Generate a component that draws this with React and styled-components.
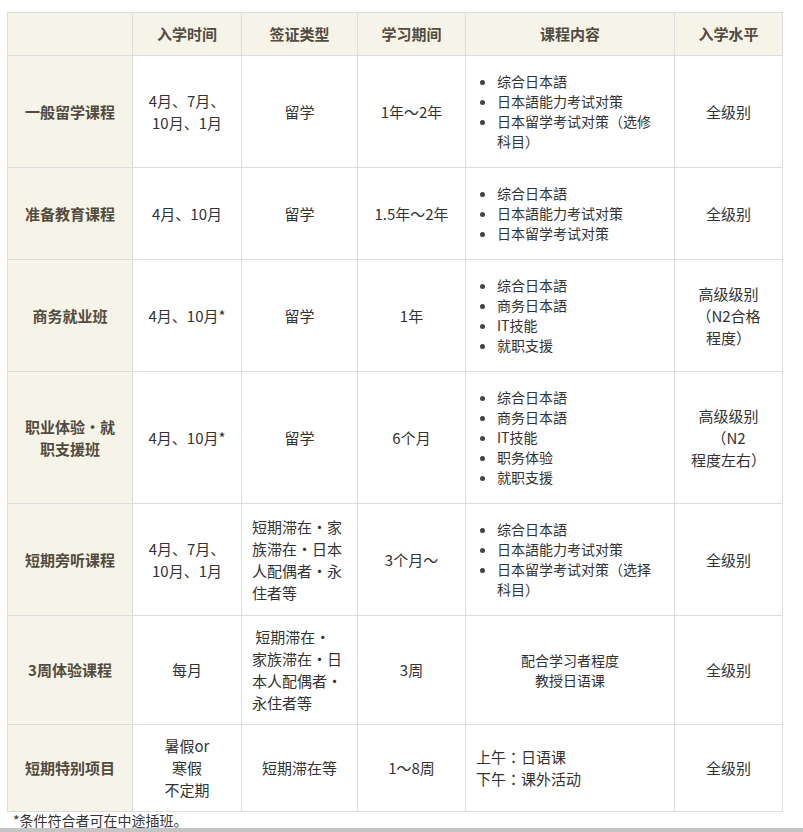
import React from "react";
import styled, { createGlobalStyle } from "styled-components";

const GlobalStyle = createGlobalStyle`
  html, body { margin: 0; padding: 0; background: #fff; }
  body {
    font-family: "Noto Sans CJK SC", "Microsoft YaHei", sans-serif;
    color: #333;
  }
`;

const Page = styled.div`
  padding: 12px 0 0 7px;
`;

const Table = styled.table`
  border-collapse: collapse;
  table-layout: fixed;
  width: 776px;
  font-size: 15px;
  line-height: 22px;
`;

const HeadCell = styled.th`
  background: #f6f4e8;
  border: 1px solid #dddddd;
  color: #524b40;
  font-weight: bold;
  font-size: 15px;
  line-height: 22px;
  padding: 10px;
  text-align: center;
  vertical-align: middle;
`;

const RowHead = styled.th`
  background: #f6f4e8;
  border: 1px solid #dddddd;
  color: #524b40;
  font-weight: bold;
  font-size: 15px;
  line-height: 22px;
  padding: 10px;
  text-align: center;
  vertical-align: middle;
`;

const Cell = styled.td`
  border: 1px solid #dddddd;
  padding: 10px;
  color: #333;
  font-size: ${(p) => (p.$small ? "14px" : "15px")};
  line-height: ${(p) => (p.$small ? "20px" : "22px")};
  text-align: ${(p) => p.$align || "center"};
  vertical-align: middle;
  background: #fff;
`;

const List = styled.ul`
  margin: 5px 0 6px;
  padding: 0 0 0 21px;
  text-align: left;
  list-style: disc outside;
`;

const Item = styled.li`
  font-size: 14px;
  line-height: 20px;
  color: #333;
  &::marker {
    color: #444;
  }
`;

const Colon = styled.span`
  font-family: "Noto Sans CJK JP", "Noto Sans CJK SC", sans-serif;
`;

const Footnote = styled.p`
  margin: 0;
  padding: 0 0 0 6px;
  font-size: 14px;
  line-height: 16px;
  color: #333;
`;

const BottomBar = styled.div`
  height: 6px;
  background: #c4c4c4;
`;

const renderText = (l) => {
  if (typeof l !== "string" || !l.includes("：")) return l;
  const parts = l.split("：");
  return parts.map((p, i) => (
    <React.Fragment key={i}>
      {i > 0 && <Colon>：</Colon>}
      {p}
    </React.Fragment>
  ));
};

const Lines = ({ lines }) =>
  lines.map((l, i) => (
    <React.Fragment key={i}>
      {i > 0 && <br />}
      {renderText(l)}
    </React.Fragment>
  ));

const headers = ["", "入学时间", "签证类型", "学习期间", "课程内容", "入学水平"];
const widths = [125, 109, 116, 108, 209, 108];

const rows = [
  {
    name: ["一般留学课程"],
    time: ["4月、7月、", "10月、1月"],
    visa: { lines: ["留学"] },
    period: "1年～2年",
    content: { list: [["综合日本語"], ["日本語能力考试对策"], ["日本留学考试对策（选修", "科目）"]] },
    level: ["全级别"],
  },
  {
    name: ["准备教育课程"],
    time: ["4月、10月"],
    visa: { lines: ["留学"] },
    period: "1.5年～2年",
    content: { list: [["综合日本語"], ["日本語能力考试对策"], ["日本留学考试对策"]] },
    level: ["全级别"],
  },
  {
    name: ["商务就业班"],
    time: ["4月、10月*"],
    visa: { lines: ["留学"] },
    period: "1年",
    content: { list: [["综合日本語"], ["商务日本語"], ["IT技能"], ["就职支援"]] },
    level: ["高级级别", "（N2合格", "程度）"],
  },
  {
    name: ["职业体验・就", "职支援班"],
    time: ["4月、10月*"],
    visa: { lines: ["留学"] },
    period: "6个月",
    content: { list: [["综合日本語"], ["商务日本語"], ["IT技能"], ["职务体验"], ["就职支援"]] },
    level: ["高级级别", "（N2", "程度左右）"],
  },
  {
    name: ["短期旁听课程"],
    time: ["4月、7月、", "10月、1月"],
    visa: { lines: ["短期滞在・家", "族滞在・日本", "人配偶者・永", "住者等"], align: "left" },
    period: "3个月～",
    content: { list: [["综合日本語"], ["日本語能力考试对策"], ["日本留学考试对策（选择", "科目）"]] },
    level: ["全级别"],
  },
  {
    name: ["3周体验课程"],
    time: ["每月"],
    visa: { lines: ["\u00a0短期滞在・", "家族滞在・日", "本人配偶者・", "永住者等"], align: "left" },
    period: "3周",
    content: { lines: ["配合学习者程度", "教授日语课"], small: true },
    level: ["全级别"],
  },
  {
    name: ["短期特别项目"],
    time: ["暑假or", "寒假", "不定期"],
    visa: { lines: ["短期滞在等"] },
    period: "1～8周",
    content: { lines: ["上午：日语课", "下午：课外活动"], align: "left" },
    level: ["全级别"],
  },
];

export default function App() {
  return (
    <>
      <GlobalStyle />
      <Page>
        <Table>
          <colgroup>
            {widths.map((w, i) => (
              <col key={i} style={{ width: w }} />
            ))}
          </colgroup>
          <thead>
            <tr>
              {headers.map((h, i) => (
                <HeadCell key={i}>{h}</HeadCell>
              ))}
            </tr>
          </thead>
          <tbody>
            {rows.map((r, i) => (
              <tr key={i}>
                <RowHead scope="row">
                  <Lines lines={r.name} />
                </RowHead>
                <Cell>
                  <Lines lines={r.time} />
                </Cell>
                <Cell $align={r.visa.align}>
                  <Lines lines={r.visa.lines} />
                </Cell>
                <Cell>{r.period}</Cell>
                {r.content.list ? (
                  <Cell $align="left">
                    <List>
                      {r.content.list.map((it, j) => (
                        <Item key={j}>
                          <Lines lines={it} />
                        </Item>
                      ))}
                    </List>
                  </Cell>
                ) : (
                  <Cell $align={r.content.align} $small={r.content.small}>
                    <Lines lines={r.content.lines} />
                  </Cell>
                )}
                <Cell>
                  <Lines lines={r.level} />
                </Cell>
              </tr>
            ))}
          </tbody>
        </Table>
        <Footnote>*条件符合者可在中途插班。</Footnote>
      </Page>
      <BottomBar />
    </>
  );
}
